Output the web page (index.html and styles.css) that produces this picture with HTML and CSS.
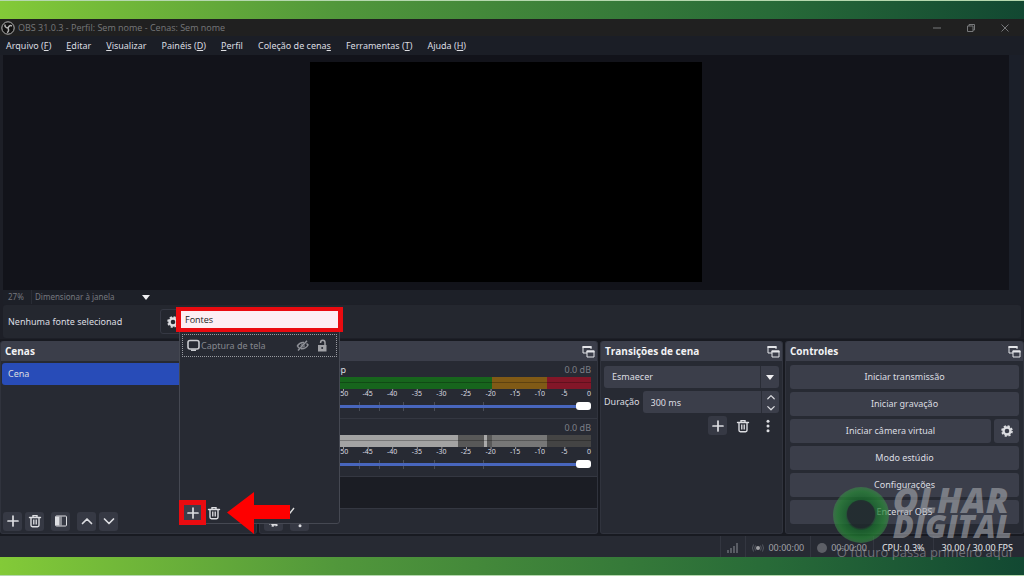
FILE: index.html
```html
<!DOCTYPE html>
<html lang="pt-BR">
<head>
<meta charset="utf-8">
<title>OBS 31.0.3</title>
<link rel="stylesheet" href="styles.css">
</head>
<body>
<svg class="defs" aria-hidden="true">
  <symbol id="plus" viewBox="0 0 14 14"><path d="M7 2v10M2 7h10" fill="none" stroke="currentColor" stroke-width="1.7" stroke-linecap="round"/></symbol>
  <symbol id="trash" viewBox="0 0 14 14"><path d="M1.5 3.5h11M5 3V1.6h4V3M3 3.7v7.6q0 1.4 1.4 1.4h5.2q1.400 0 1.400-1.400V3.700" fill="none" stroke="currentColor" stroke-width="1.400" stroke-linecap="round"/><path d="M5.500 5.500v5M7 5.500v5M8.500 5.500v5" stroke="currentColor" stroke-width="0.900"/></symbol>
  <symbol id="up" viewBox="0 0 14 14"><path d="M2.500 9.500L7 5l4.500 4.500" fill="none" stroke="currentColor" stroke-width="1.700" stroke-linecap="round" stroke-linejoin="round"/></symbol>
  <symbol id="down" viewBox="0 0 14 14"><path d="M2.500 5L7 9.500 11.500 5" fill="none" stroke="currentColor" stroke-width="1.700" stroke-linecap="round" stroke-linejoin="round"/></symbol>
  <symbol id="dots" viewBox="0 0 14 14"><g fill="currentColor"><circle cx="7" cy="2.300" r="1.500"/><circle cx="7" cy="7" r="1.500"/><circle cx="7" cy="11.700" r="1.500"/></g></symbol>
  <symbol id="gear" viewBox="0 0 14 14"><circle cx="7" cy="7" r="3.500" fill="none" stroke="currentColor" stroke-width="2.400"/><circle cx="7" cy="7" r="5" fill="none" stroke="currentColor" stroke-width="1.600" stroke-dasharray="2.200 1.727"/></symbol>
  <symbol id="float" viewBox="0 0 13 13"><path d="M5 8H1V1.500h8V4" fill="none" stroke="currentColor"/><path d="M.5 1h9v2h-9zM4.500 5.500h8v2h-8z" fill="currentColor"/><path d="M5 6h7v6H5z" fill="none" stroke="currentColor"/></symbol>
  <symbol id="filter" viewBox="0 0 14 14"><rect x="1.500" y="2" width="11" height="10" rx="1" fill="none" stroke="currentColor" stroke-width="1"/><path d="M2 2.500h3.500v9H2z" fill="currentColor"/><path d="M5.500 2.500h2.500v9H5.500z" fill="currentColor" opacity=".5"/></symbol>
</svg>

<div class="window">
  <header class="titlebar">
    <svg class="logo" viewBox="0 0 14 14"><circle cx="7" cy="7" r="6.200" fill="#111" stroke="#b5b5b5" stroke-width="1"/><path d="M4 3.500q-.5 3 3 3.500M11 5q-2.500-1.500-4 2M6 11.500q2.500-1 1-4.500" fill="none" stroke="#b5b5b5" stroke-width="1.500"/></svg>
    <span class="title">OBS 31.0.3 - Perfil: Sem nome - Cenas: Sem nome</span>
    <div class="winbtns">
      <button aria-label="Minimizar"><svg viewBox="0 0 10 10"><path d="M1 5h8"/></svg></button>
      <button aria-label="Restaurar"><svg viewBox="0 0 10 10"><path d="M1.500 3h5.500v5.500H1.500zM3 3V1.500h5.500V7H7"/></svg></button>
      <button aria-label="Fechar"><svg viewBox="0 0 10 10"><path d="M1.500 1.500l7 7M8.500 1.500l-7 7"/></svg></button>
    </div>
  </header>

  <nav class="menu">
    <button>Arquivo (<u>F</u>)</button><button><u>E</u>ditar</button><button><u>V</u>isualizar</button><button>Painéis (<u>D</u>)</button><button><u>P</u>erfil</button><button>Coleção de cena<u>s</u></button><button>Ferramentas (<u>T</u>)</button><button>Ajuda (<u>H</u>)</button>
  </nav>

  <main class="preview"><div class="stage"><div class="canvas"></div></div><div class="scroll"></div></main>

  <div class="scale">
    <span class="percent">27%</span>
    <select class="zoom" aria-label="Escala"><option>Dimensionar à janela</option></select>
    <svg class="caret" viewBox="0 0 8 5"><path d="M0 0h8L4 5z"/></svg>
  </div>

  <section class="context"><span>Nenhuma fonte selecionad</span><button class="props" aria-label="Propriedades"><svg class="icon"><use href="#gear"/></svg></button></section>

  <div class="docks">
    <section class="dock">
      <h2>Cenas</h2>
      <ul class="scenes"><li>Cena</li></ul>
      <div class="tools">
        <button aria-label="Adicionar cena"><svg class="icon"><use href="#plus"/></svg></button>
        <button aria-label="Remover cena"><svg class="icon"><use href="#trash"/></svg></button>
        <button class="spaced" aria-label="Filtros"><svg class="icon"><use href="#filter"/></svg></button>
        <button class="spaced" aria-label="Subir"><svg class="icon"><use href="#up"/></svg></button>
        <button aria-label="Descer"><svg class="icon"><use href="#down"/></svg></button>
      </div>
    </section>

    <section class="dock">
      <h2><svg class="floaticon"><use href="#float"/></svg></h2>
      <div class="channel">
        <div class="chhead"><label for="vol1">Desktop</label><span>0.0 dB</span></div>
        <div class="meter color"></div>
        <div class="ticks"><span>-50</span><span>-45</span><span>-40</span><span>-35</span><span>-30</span><span>-25</span><span>-20</span><span>-15</span><span>-10</span><span>-5</span><span>0</span></div>
        <div class="fader"><input id="vol1" type="range" value="100"></div>
      </div>
      <div class="channel">
        <div class="chhead"><span>0.0 dB</span></div>
        <div class="meter gray"></div>
        <div class="ticks"><span>-50</span><span>-45</span><span>-40</span><span>-35</span><span>-30</span><span>-25</span><span>-20</span><span>-15</span><span>-10</span><span>-5</span><span>0</span></div>
        <div class="fader"><input type="range" value="100" aria-label="Volume"></div>
      </div>
      <div class="void"></div>
      <div class="tools mixertools">
        <button aria-label="Áudio avançado"><svg class="icon"><use href="#gear"/></svg></button>
        <button class="spaced" aria-label="Menu do mixer"><svg class="icon"><use href="#dots"/></svg></button>
      </div>
    </section>

    <section class="dock">
      <h2>Transições de cena<svg class="floaticon"><use href="#float"/></svg></h2>
      <div class="transition">
        <div class="combo"><select aria-label="Transição"><option>Esmaecer</option></select><svg class="caret" viewBox="0 0 8 5"><path d="M0 0h8L4 5z"/></svg></div>
        <div class="duration">
          <label for="dur">Duração</label>
          <div class="spin"><input id="dur" type="text" value="300 ms"><div class="steps"><button aria-label="Aumentar"><svg><use href="#up"/></svg></button><button aria-label="Diminuir"><svg><use href="#down"/></svg></button></div></div>
        </div>
        <div class="transtools">
          <button class="filled" aria-label="Adicionar transição"><svg class="icon"><use href="#plus"/></svg></button>
          <button aria-label="Remover transição"><svg class="icon"><use href="#trash"/></svg></button>
          <button aria-label="Mais opções"><svg class="icon"><use href="#dots"/></svg></button>
        </div>
      </div>
    </section>

    <section class="dock">
      <h2>Controles<svg class="floaticon"><use href="#float"/></svg></h2>
      <div class="controls">
        <button>Iniciar transmissão</button>
        <button>Iniciar gravação</button>
        <div class="pair"><button>Iniciar câmera virtual</button><button class="square" aria-label="Configurar câmera"><svg class="icon"><use href="#gear"/></svg></button></div>
        <button>Modo estúdio</button>
        <button>Configurações</button>
        <button>Encerrar OBS</button>
      </div>
    </section>
  </div>

  <footer class="status">
    <div class="cell"><svg class="bars" viewBox="0 0 12 10"><path d="M0 7h2v3H0zM3 5h2v5H3zM6 3h2v7H6zM9 0h2v10H9z"/></svg></div>
    <div class="cell"><svg class="live" viewBox="0 0 12 10"><circle cx="6" cy="5" r="2" fill="#a0a1a5"/><path d="M3.500 2.500q-1.500 2.500 0 5M8.500 2.500q1.500 2.500 0 5M1.500 1.500q-2 3.500 0 7M10.500 1.500q2 3.500 0 7" fill="none" stroke="#555861"/></svg>00:00:00</div>
    <div class="cell"><i class="rec"></i>00:00:00</div>
    <div class="cell bright">CPU: 0.3%</div>
    <div class="cell bright">30.00 / 30.00 FPS</div>
  </footer>
</div>

<aside class="sources">
  <h2>Fontes</h2>
  <div class="source">
    <svg class="monitor" viewBox="0 0 13 13"><path d="M3 1.500h7q2 0 2 2v4.500q0 2-2 2H3q-2 0-2-2V3.500q0-2 2-2z" fill="none" stroke="#c9cacf" stroke-width="1.600"/><path d="M4 10.500h5v1.500H4z" fill="#c9cacf"/></svg>
    <span>Captura de tela</span>
    <svg class="eye" viewBox="0 0 13 11"><path d="M1.200 6Q4 2 8 2.600M5 8.700Q10 9 12 5L10.500 3.500M1.200 6l2 2M2 10.500L11 .8" fill="none" stroke="#8f9198" stroke-width="1.500"/><path d="M4.500 6.500q0-2.500 3-2.700zM6 7.500q3 .2 3-2.500z" fill="#8f9198"/></svg>
    <svg class="lock" viewBox="0 0 10 13"><path d="M1 6h8.500v6.500H1z" fill="#a0a1a6"/><path d="M8 6V3.500Q8 1.200 5.800 1.200T3.600 3.500V4" fill="none" stroke="#a0a1a6" stroke-width="1.500"/><circle cx="5.200" cy="9" r="1" fill="#272a33"/></svg>
  </div>
  <div class="sourcetools">
    <button class="marked" aria-label="Adicionar fonte"><svg class="icon"><use href="#plus"/></svg></button>
    <button aria-label="Remover fonte"><svg class="icon"><use href="#trash"/></svg></button>
  </div>
</aside>
<svg class="arrow" viewBox="0 0 68 42"><path d="M60 19l3 2 4-5" fill="none" stroke="#ddd" stroke-width="1.400"/><path d="M0 20.500L27 0v13h36v14H27v15z" fill="#fe0000"/></svg>

<div class="watermark">
  <svg viewBox="0 0 58 58"><defs><radialGradient id="ring"><stop offset=".46" stop-color="#173b25" stop-opacity=".5"/><stop offset=".55" stop-color="#16702a"/><stop offset=".85" stop-color="#268a35"/><stop offset="1" stop-color="#3c9a49" stop-opacity=".7"/></radialGradient></defs><circle cx="29" cy="29" r="28" fill="url(#ring)" opacity=".7"/><circle cx="29" cy="28" r="14" fill="#20262c" opacity=".7"/></svg>
  <strong><span class="big">OLHAR</span><span>DIGITAL</span></strong>
  <em>O futuro passa primeiro aqui</em>
</div>
</body>
</html>
```
FILE: styles.css
```css
* { box-sizing: border-box; }
body {
  margin: 0;
  position: relative;
  min-height: 100vh;
  padding: 19px 0;
  display: grid;
  background: linear-gradient(90deg, #83ca38 0%, #51973b 33%, #286b38 75%, #124832 100%);
  box-shadow: inset 0 1px #b5d8ae, inset 0 -1px #b5d8ae;
  color: #dcdde1;
  font: 9px/14px "Noto Sans", "Open Sans", sans-serif;
}
button, input, select { font: inherit; color: inherit; border: 0; padding: 0; margin: 0; background: none; }
h2, ul { margin: 0; padding: 0; list-style: none; }
svg { display: block; flex: none; }
.defs { position: absolute; width: 0; height: 0; }
.icon { width: 14px; height: 14px; }
.window {
  display: grid;
  grid-template-rows: 17px 19px 1fr 14px 35px 197px 21px;
  background: #1d1f27;
  min-width: 0;
}
.titlebar { display: flex; align-items: center; background: #202020; color: #77787a; }
.logo { width: 14px; height: 14px; margin: 0 3px 0 1px; }
.title { flex: 1; font: 9px/14px "Open Sans", sans-serif; }
.winbtns { display: flex; gap: 24px; padding-right: 14px; }
.winbtns svg { width: 10px; height: 10px; fill: none; stroke: #77787a; }
.menu { display: flex; align-items: center; gap: 15px; padding-left: 6px; background: #1b1e26; }
.preview { display: flex; margin: 0 3px; background: #12131a; }
.stage { flex: 1; display: flex; justify-content: center; padding: 7px 0 8px; }
.canvas { aspect-ratio: 16 / 9; height: 100%; background: #000; }
.scroll { width: 12px; background: #1b1f29; }
.scale { display: flex; align-items: center; margin: 0 3px; background: #1d2028; color: #75777e; font-size: 8px; }
.percent { width: 28px; padding-left: 5px; }
.zoom { appearance: none; width: 111px; padding-left: 3px; border-left: 1px solid #292c35; }
.caret { width: 8px; height: 5px; fill: #f0f0f2; pointer-events: none; }
.context { display: flex; align-items: center; margin: 1px 3px 1px; padding-left: 5px; background: #24272f; border-radius: 3px; }
.context span { width: 152px; }
.props { width: 26px; height: 25px; display: grid; place-items: center; border: 1px solid #353843; border-radius: 3px; }

.docks { display: grid; grid-template-columns: 257fr 339fr 183fr 239fr; gap: 2px; padding: 2px 0; background: #181a21; }
.dock { display: flex; flex-direction: column; min-width: 0; background: #272a33; border: 1px solid #30333d; border-top: 0; border-radius: 3px; }
.dock h2 {
  display: flex; align-items: center; justify-content: space-between;
  height: 20px; padding: 0 2px 0 4px;
  background: #3b3e4a; border-radius: 3px 3px 0 0;
  color: #f2f2f4; font: 700 10px/14px "Open Sans", sans-serif;
}
.floaticon { width: 13px; height: 13px; margin-left: auto; color: #e4e5e9; }
.scenes { flex: 1; padding: 2px 1px; }
.scenes li { height: 22px; padding: 4px 6px; background: #284cb8; border-radius: 3px; }
.tools { display: flex; align-items: center; gap: 3px; height: 24px; padding-left: 2px; }
.tools button, .filled { width: 19px; height: 19px; display: grid; place-items: center; background: #363944; border-radius: 3px; }
.tools .spaced { margin-left: 4px; }
.mixertools { padding-left: 4px; }
.channel { height: 58px; padding: 2px 6px 0 70px; border-bottom: 1px solid #343741; }
.chhead { display: flex; color: #7d7f87; }
.chhead label { width: 16px; display: flex; justify-content: flex-end; color: #dcdde1; }
.chhead span { margin-left: auto; }
.meter { height: 12px; }
.color { background: linear-gradient(#0004, #0004) 0 5px / 100% 1px no-repeat, linear-gradient(90deg, #17651d 62%, #805a16 62% 83%, #831628 83%); }
.gray { background: linear-gradient(#0004, #0004) 0 5px / 100% 1px no-repeat, linear-gradient(90deg, #a3a3a3 49%, #585858 49% 59%, #aaa 59% 60%, #585858 60% 62%, #777 62% 83%, #444 83%); }
.ticks { display: flex; justify-content: space-between; margin: 0 2px 0 13px; font-size: 7px; line-height: 10px; background: linear-gradient(90deg, #9a9ba0 1px, transparent 1px) 0 0 / 10% 2px repeat-x; }
.ticks span { width: 0; display: flex; justify-content: center; white-space: nowrap; }
.fader { height: 14px; display: flex; align-items: center; background:
  linear-gradient(#4b4e58, #4b4e58) 11% 50% / 1px 9px no-repeat,
  linear-gradient(#4b4e58, #4b4e58) 19% 50% / 1px 9px no-repeat,
  linear-gradient(#4b4e58, #4b4e58) 28% 50% / 1px 9px no-repeat,
  linear-gradient(#4b4e58, #4b4e58) 40% 50% / 1px 9px no-repeat,
  linear-gradient(#4b4e58, #4b4e58) 59% 50% / 1px 9px no-repeat; }
.fader input { appearance: none; width: 100%; height: 3px; background: #4866bd; }
.fader input::-webkit-slider-thumb { appearance: none; width: 15px; height: 8px; border-radius: 3px; background: #fff; }
.void { flex: 1; background: #1b1d24; border-bottom: 1px solid #343741; }

.transition { display: flex; flex-direction: column; gap: 3px; padding: 5px 3px; }
.combo, .spin { display: flex; align-items: center; height: 22px; background: #3b3e4a; border-radius: 3px; }
.combo { padding-right: 5px; }
.combo select { appearance: none; flex: 1; height: 22px; padding-left: 8px; margin-right: 5px; border-right: 1px solid #2a2d36; }
.duration { display: flex; align-items: center; gap: 3px; }
.duration label { flex: none; }
.spin { flex: 1; min-width: 0; }
.spin input { flex: 1; min-width: 0; height: 22px; padding-left: 8px; }
.steps { width: 18px; border-left: 1px solid #2a2d36; }
.steps button { width: 100%; height: 11px; display: grid; place-items: center; }
.steps svg { width: 10px; height: 10px; }
.transtools { display: flex; justify-content: flex-end; gap: 6px; padding-right: 2px; }
.transtools button { width: 19px; height: 19px; display: grid; place-items: center; border-radius: 3px; }

.controls { display: grid; gap: 3px; padding: 4px 4px 4px; }
.controls button { height: 24px; background: #3b3e4a; border-radius: 3px; }
.pair { display: flex; gap: 3px; }
.pair button { flex: 1; }
.pair .square { flex: 0 0 25px; display: grid; place-items: center; }

.status { display: flex; justify-content: flex-end; padding-right: 3px; background: #272a33; color: #a0a1a6; }
.cell { display: flex; align-items: center; gap: 4px; padding: 2px 6px 0; border-left: 1px solid #333640; }
.bright { padding: 2px 8px 0; color: #e6e7ea; }
.bars { width: 12px; height: 10px; fill: #595c64; }
.live { width: 12px; height: 10px; }
.rec { width: 10px; height: 10px; border-radius: 50%; background: #5d5f66; }

.sources {
  position: absolute; left: 179px; bottom: 52px; width: 161px; height: 217px;
  display: flex; flex-direction: column;
  background: #272a33; border: 1px solid #454852; border-radius: 3px;
}
.sources h2 { height: 25px; margin: -1px -4px 2px; padding: 1px 4px; background: #fdeef3; border: solid #ea0b10; border-width: 4px 5px; color: #222; font: 9px/15px "Open Sans", sans-serif; }
.source { display: flex; align-items: center; height: 23px; margin: 0 2px; padding: 0 9px 0 4px; border: 1px dotted #999ba1; color: #85878e; }
.source span { flex: 1; margin-left: 1px; }
.monitor { width: 13px; height: 13px; }
.eye { width: 13px; height: 11px; }
.lock { width: 10px; height: 13px; margin-left: 8px; }
.sourcetools { display: flex; align-items: center; margin: auto 0 -2px -1px; }
.sourcetools button { width: 14px; height: 25px; display: grid; place-items: center; }
.sourcetools .marked { width: 27px; margin-right: 1px; border: 5px solid #ea0b10; background: #3b3e4a; }
.arrow { position: absolute; left: 227px; bottom: 42px; width: 68px; height: 42px; }

.watermark { position: absolute; right: 12px; bottom: 16px; display: grid; grid-template-columns: 58px auto; column-gap: 3px; align-items: start; pointer-events: none; }
.watermark svg { width: 58px; height: 58px; }
.watermark strong { display: grid; color: #a5a7ad; opacity: .6; font: italic 800 31px/26px "Open Sans", sans-serif; padding-top: 1px; }
.watermark .big { font-size: 35px; }
.watermark em { grid-column: 1 / -1; justify-self: end; color: #9a9ca2; opacity: .6; font: 13px/16px "Open Sans", sans-serif; }
```
